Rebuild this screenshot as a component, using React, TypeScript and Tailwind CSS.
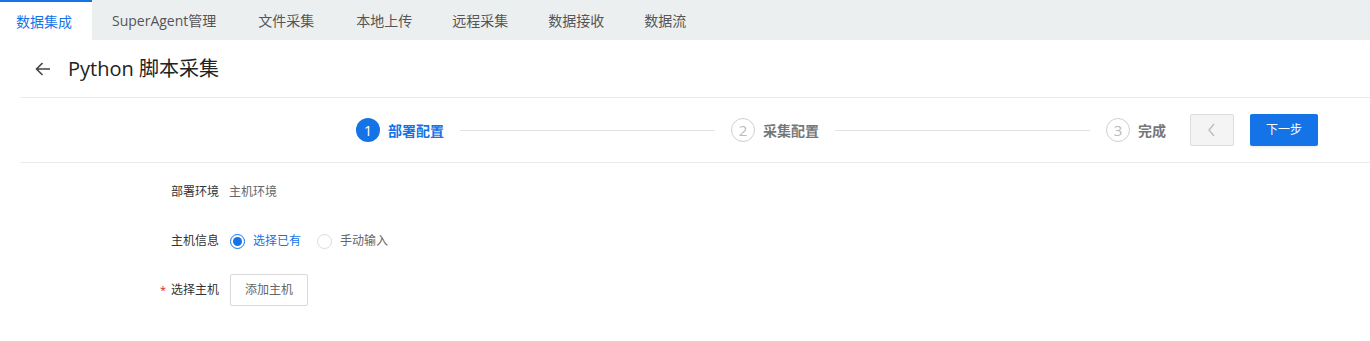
import React from "react";

const font = { fontFamily: '"Open Sans", "Noto Sans CJK SC", sans-serif' };

export default function App() {
  const tabs = ["本地上传", "远程采集", "数据接收", "数据流"];
  return (
    <div className="w-[1370px] h-[341px] bg-white text-[#333]" style={font}>
      <div className="h-10 bg-[#eceff0] flex items-stretch text-[14px]">
        <div className="bg-white border-t-2 border-[#1473e6] pl-4 pr-5 flex items-center text-[#1473e6]">数据集成</div>
        <div className="pl-5 pr-[22px] flex items-center text-[#555]">SuperAgent管理</div>
        <div className="pl-5 pr-[22px] flex items-center text-[#555]">文件采集</div>
        {tabs.map((t) => (
          <div key={t} className="px-5 flex items-center text-[#555]">{t}</div>
        ))}
      </div>
      <div className="h-[58px] flex items-center pl-[13px] border-b border-[#ebebeb] ml-5">
        <svg width="20" height="20" viewBox="0 0 20 20" className="mr-[15px]">
          <path d="M17 10H3.5M9.5 4 3.5 10l6 6" fill="none" stroke="#444" strokeWidth="1.6" />
        </svg>
        <span className="text-[20px] text-[#222]">Python 脚本采集</span>
      </div>
      <div className="ml-5 h-[65px] flex items-center justify-end pr-[52px] border-b border-[#ebebeb]">
        <div className="w-[810px] flex items-center">
          <div className="w-6 h-6 rounded-full bg-[#1473e6] text-white flex items-center justify-center text-[15px]">1</div>
          <span className="ml-2 text-[14px] font-bold text-[#1473e6]">部署配置</span>
          <div className="flex-1 mx-4 h-px bg-[#e2e2e2]" />
          <div className="w-6 h-6 rounded-full border border-[#cfcfcf] text-[#bbb] flex items-center justify-center text-[15px]">2</div>
          <span className="ml-2 text-[14px] font-bold text-[#777]">采集配置</span>
          <div className="flex-1 mx-4 h-px bg-[#e2e2e2]" />
          <div className="w-6 h-6 rounded-full border border-[#cfcfcf] text-[#bbb] flex items-center justify-center text-[15px]">3</div>
          <span className="ml-2 text-[14px] font-bold text-[#777]">完成</span>
        </div>
        <div className="ml-6 w-[44px] h-8 border border-[#dcdcdc] bg-[#f4f4f4] rounded-[2px] flex items-center justify-center">
          <svg width="12" height="14" viewBox="0 0 12 14"><path d="M8 1 3 7l5 6" fill="none" stroke="#bbb" strokeWidth="1.3" /></svg>
        </div>
        <div className="ml-4 w-[68px] h-8 bg-[#1473e6] rounded-[2px] text-white text-[12px] flex items-center justify-center shadow-[0_2px_2px_rgba(0,0,0,0.06)]">下一步</div>
      </div>
      <div className="text-[12px] pt-[19px]">
        <div className="flex items-center h-5">
          <div className="w-[219px] text-right text-[#333]">部署环境</div>
          <div className="ml-[10px] text-[#666]">主机环境</div>
        </div>
        <div className="flex items-center h-5 mt-[29px]">
          <div className="w-[219px] text-right text-[#333]">主机信息</div>
          <div className="ml-[11px] flex items-center">
            <span className="w-[15px] h-[15px] rounded-full border border-[#1473e6] flex items-center justify-center">
              <span className="w-[9px] h-[9px] rounded-full bg-[#1473e6]" />
            </span>
            <span className="ml-2 text-[#1473e6]">选择已有</span>
            <span className="ml-4 w-[15px] h-[15px] rounded-full border border-[#dcdcdc]" />
            <span className="ml-2 text-[#666]">手动输入</span>
          </div>
        </div>
        <div className="flex items-center mt-[23px]">
          <div className="w-[219px] text-right text-[#333]"><span className="text-[#e02020] mr-[5px] text-[11px]">*</span>选择主机</div>
          <div className="ml-[11px] w-[78px] h-[32px] border border-[#d9d9d9] rounded-[2px] flex items-center justify-center text-[#666]">添加主机</div>
        </div>
      </div>
    </div>
  );
}
